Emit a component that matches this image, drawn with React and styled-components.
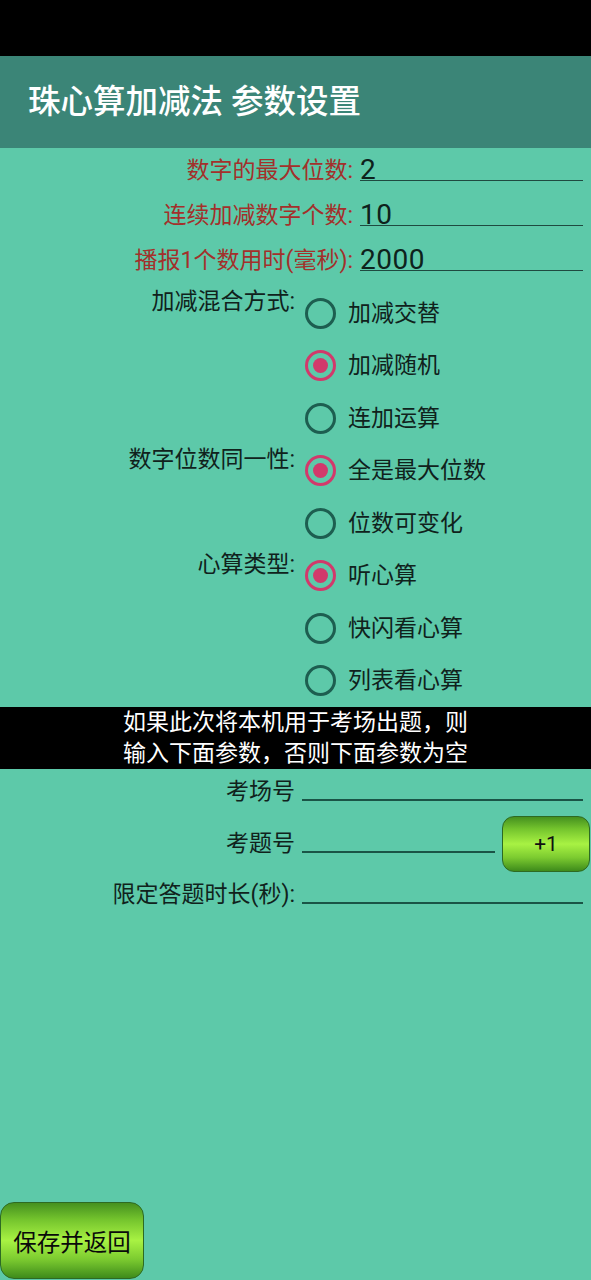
import styled, { createGlobalStyle } from "styled-components";

const GlobalStyle = createGlobalStyle`
  html, body {
    margin: 0;
    padding: 0;
    background-color: #5dc9a9;
  }
  body {
    font-family: Roboto, "Noto Sans CJK SC", sans-serif;
  }
`;

const mixOptions = ["加减交替", "加减随机", "连加运算"];
const digitOptions = ["全是最大位数", "位数可变化"];
const typeOptions = ["听心算", "快闪看心算", "列表看心算"];

const RadioGroup = ({ label, options, checked }) => {
  return (
    <Group>
      <GroupLabel>{label}</GroupLabel>
      <OptionList>
        {options.map((opt) => (
          <Option key={opt}>
            <RadioCircle $checked={opt === checked} />
            <OptionText>{opt}</OptionText>
          </Option>
        ))}
      </OptionList>
    </Group>
  );
};

const App = () => {
  return (
    <>
      <GlobalStyle />
      <Page>
        <StatusBar />
        <Header>
          <Title>珠心算加减法 参数设置</Title>
        </Header>

        <Fields>
          <FieldRow>
            <FieldLabel>数字的最大位数:</FieldLabel>
            <FieldValue>2</FieldValue>
          </FieldRow>
          <FieldRow>
            <FieldLabel>连续加减数字个数:</FieldLabel>
            <FieldValue>10</FieldValue>
          </FieldRow>
          <FieldRow>
            <FieldLabel>播报1个数用时(毫秒):</FieldLabel>
            <FieldValue>2000</FieldValue>
          </FieldRow>
        </Fields>

        <Groups>
          <RadioGroup label="加减混合方式:" options={mixOptions} checked="加减随机" />
          <RadioGroup label="数字位数同一性:" options={digitOptions} checked="全是最大位数" />
          <RadioGroup label="心算类型:" options={typeOptions} checked="听心算" />
        </Groups>

        <Banner>
          如果此次将本机用于考场出题，则
          <br />
          输入下面参数，否则下面参数为空
        </Banner>

        <ExamFields>
          <ExamRow>
            <ExamLabel>考场号</ExamLabel>
            <ExamLine />
          </ExamRow>
          <ExamRow>
            <ExamLabel>考题号</ExamLabel>
            <ExamLine />
            <PlusButton>+1</PlusButton>
          </ExamRow>
          <ExamRow>
            <ExamLabel>限定答题时长(秒):</ExamLabel>
            <ExamLine />
          </ExamRow>
        </ExamFields>

        <Footer>
          <SaveButton>保存并返回</SaveButton>
        </Footer>
      </Page>
    </>
  );
};

const Page = styled.div`
  min-height: 100vh;
  display: flex;
  flex-direction: column;
`;

const StatusBar = styled.div`
  height: 56px;
  background-color: #000;
`;

const Header = styled.div`
  height: 92px;
  background-color: #3b8577;
  display: flex;
  align-items: center;
  padding-left: 28px;
`;

const Title = styled.div`
  color: #fff;
  font-size: 32.5px;
  font-weight: 500;
  line-height: 1;
`;

const Fields = styled.div`
  display: flex;
  flex-direction: column;
  gap: 12px;
`;

const FieldRow = styled.div`
  height: 33px;
  display: flex;
  align-items: flex-end;
  gap: 7px;
`;

const FieldLabel = styled.div`
  width: 353px;
  text-align: right;
  color: #a3302b;
  font-size: 23px;
  line-height: 26px;
  margin-bottom: -3px;
  white-space: nowrap;
`;

const FieldValue = styled.div`
  width: 223px;
  height: 20px;
  font-size: 28px;
  line-height: 20px;
  color: #0e221c;
  letter-spacing: 0.5px;
  border-bottom: 1.5px solid #1f4a40;
`;

const Groups = styled.div`
  margin-top: 16px;
  display: flex;
  flex-direction: column;
`;

const Group = styled.div`
  display: flex;
  align-items: flex-start;
`;

const GroupLabel = styled.div`
  width: 295px;
  text-align: right;
  font-size: 23px;
  line-height: 30px;
  color: #10221c;
  white-space: nowrap;
`;

const OptionList = styled.div`
  display: flex;
  flex-direction: column;
`;

const Option = styled.div`
  height: 52.5px;
  display: flex;
  align-items: center;
  gap: 12px;
  padding-left: 10px;
`;

const RadioCircle = styled.span`
  width: 31px;
  height: 31px;
  box-sizing: border-box;
  border-radius: 50%;
  border: 3px solid ${({ $checked }) => ($checked ? "#d2396b" : "#1d5e50")};
  display: flex;
  align-items: center;
  justify-content: center;

  &::after {
    content: "";
    width: 15px;
    height: 15px;
    border-radius: 50%;
    background-color: #d2396b;
    display: ${({ $checked }) => ($checked ? "block" : "none")};
  }
`;

const OptionText = styled.span`
  font-size: 23px;
  color: #10221c;
  line-height: 1;
`;

const Banner = styled.div`
  height: 62px;
  background-color: #000;
  color: #fff;
  font-size: 23px;
  line-height: 31px;
  text-align: center;
`;

const ExamFields = styled.div`
  display: flex;
  flex-direction: column;
  gap: 18.5px;
`;

const ExamRow = styled.div`
  height: 33px;
  display: flex;
  align-items: flex-end;
  gap: 7px;
  padding-right: 8px;
`;

const ExamLabel = styled.div`
  width: 295px;
  flex-shrink: 0;
  text-align: right;
  font-size: 23px;
  line-height: 26px;
  margin-bottom: -3px;
  color: #10221c;
  white-space: nowrap;
`;

const ExamLine = styled.div`
  flex: 1;
  height: 0;
  margin-bottom: 1px;
  border-bottom: 2px solid #1a5446;
`;

const greenGradient = `linear-gradient(
  to bottom,
  #45901f 0%,
  #74c42d 22%,
  #a8f243 50%,
  #7ccb30 75%,
  #3e8b1b 100%
)`;

const PlusButton = styled.button`
  width: 88px;
  height: 56px;
  margin-right: -7px;
  margin-bottom: -18px;
  flex-shrink: 0;
  border: 1.5px solid #2d6a23;
  border-radius: 12px;
  background: ${greenGradient};
  font-family: Roboto, "Noto Sans CJK SC", sans-serif;
  font-size: 21px;
  color: #111;
`;

const Footer = styled.div`
  margin-top: auto;
  padding-bottom: 1px;
  display: flex;
`;

const SaveButton = styled.button`
  width: 144px;
  height: 77px;
  border: 1.5px solid #2d6a23;
  border-radius: 14px;
  background: ${greenGradient};
  font-family: Roboto, "Noto Sans CJK SC", sans-serif;
  font-size: 23.5px;
  color: #0a0a0a;
  padding: 0;
`;

export default App;
